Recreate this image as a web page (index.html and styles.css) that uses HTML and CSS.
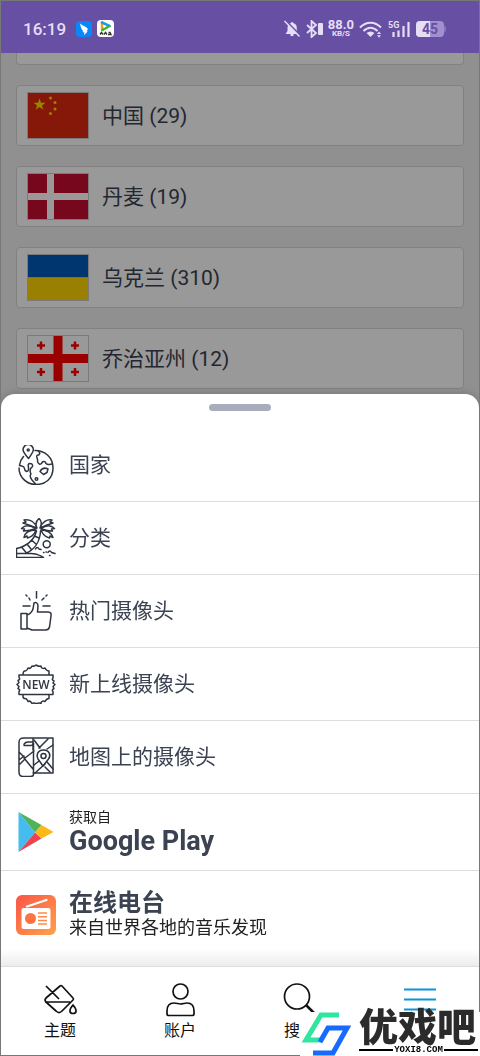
FILE: index.html
```
<!DOCTYPE html>
<html lang="zh-CN">
<head>
    <meta charset="UTF-8">
    <meta name="viewport" content="width=device-width, initial-scale=1.0">
    <title>摄像头</title>
    <link rel="stylesheet" href="styles.css">
</head>
<body>
    <header class="status-bar">
        <span class="clock">16:19</span>
        <svg class="app" viewBox="0 0 16 16" width="16" height="16">
            <rect width="16" height="16" rx="4" fill="#0a86fb"/>
            <path d="M4 2.5c2 1.800 5 2.600 7.200 4.500.9.9.6 2-.5 3.200l1 .2-3.800 3.800.6-2.700-2.200-.6 1-.7C5.500 8.600 4.400 5.500 4 2.500z" fill="#fff"/>
        </svg>
        <svg class="app" viewBox="0 0 17 17" width="17" height="17">
            <rect width="17" height="17" rx="4" fill="#fff"/>
            <path d="M5 2.500v7.500" stroke="#ff9d18" stroke-width="2.500" stroke-linecap="round"/>
            <path d="M5 2.500L12.500 6" stroke="#1a9bf0" stroke-width="2.500" stroke-linecap="round"/>
            <path d="M5.500 9.800L12.500 6" stroke="#35b82c" stroke-width="2.500" stroke-linecap="round"/>
            <path d="M7 5v3l2.500-1.800z" fill="#fff"/>
            <path d="M3 14.500l1.500-2 1.500 2M7 14.500l1.500-2 1.500 2M11.500 12.500h1.500l1 2h-3" fill="none" stroke="#333" stroke-width="1.400"/>
        </svg>
        <div class="signals">
            <svg viewBox="0 0 18 18" width="18" height="18">
                <path d="M2.500 14l2-3V8c0-3 1.500-4.500 3.500-5 .2-1.500 2-1.500 2.200 0 2.300.6 3.600 2.200 3.600 5v3l2 3z" fill="#e6def4"/>
                <path d="M7.500 15h3" stroke="#e6def4" stroke-width="2"/>
                <path d="M2.500 .5l15 15.500" stroke="#6750a4" stroke-width="2"/>
                <path d="M1.500 1l15 15.500" stroke="#e6def4" stroke-width="1.500"/>
            </svg>
            <svg viewBox="0 0 17 18" width="17" height="18">
                <path d="M1 5l9 8-4.500 4V1L10 5l-9 8" fill="none" stroke="#e6def4" stroke-width="1.800"/>
                <rect x="12" y="3" width="5" height="12" rx="1" fill="#e6def4"/>
            </svg>
            <div class="speed"><b>88.0</b><small>KB/S</small></div>
            <svg viewBox="0 0 24 18" width="24" height="18">
                <path d="M1 7.500C7 1 16 1 22 7.500M4.500 11C9 6.500 14 6.500 18.500 11" fill="none" stroke="#e6def4" stroke-width="2"/>
                <path d="M7.500 13c2.500-2 5.500-2 8 0l-4 4z" fill="#e6def4"/>
                <path d="M18 14l2-2.500 2 2.500zM18 15.200l2 2.500 2-2.500z" fill="#e6def4"/>
            </svg>
            <svg viewBox="0 0 23 18" width="23" height="18">
                <text x="0" y="8" class="net">5G</text>
                <path d="M5.500 12v5M10.500 10.500v6.500M15.500 6v11M20.500 2v15" stroke="#e6def4" stroke-width="2.200"/>
            </svg>
            <svg viewBox="0 0 31 16" width="31" height="16">
                <path d="M4 0h20a4 4 0 0 1 4 4v8a4 4 0 0 1-4 4H4a4 4 0 0 1-4-4V4a4 4 0 0 1 4-4z" fill="#a28fce"/>
                <path d="M28.500 4q2.500 4 0 8z" fill="#a28fce"/>
                <path d="M4 0h10v16H4a4 4 0 0 1-4-4V4a4 4 0 0 1 4-4z" fill="#e6def4"/>
                <text x="6" y="13" class="charge">45</text>
            </svg>
        </div>
    </header>

    <main class="countries">
        <div class="country country-cut"></div>
        <a class="country" href="#">
            <svg class="flag" viewBox="0 0 60 45">
                <path fill="#de2910" d="M0 0h60v45H0z"/>
                <path fill="#ffde00" d="M11.500 5.500l1.500 4.200h4.500l-3.600 2.700 1.400 4.300-3.800-2.600-3.800 2.600 1.400-4.300-3.600-2.700H10z"/>
                <g fill="#ffde00"><circle cx="22.500" cy="5" r="1.500"/><circle cx="27" cy="9.500" r="1.500"/><circle cx="27" cy="16" r="1.500"/><circle cx="22.500" cy="20.500" r="1.500"/></g>
            </svg>
            <span>中国 (29)</span>
        </a>
        <a class="country" href="#">
            <svg class="flag" viewBox="0 0 60 45">
                <path fill="#c60c30" d="M0 0h60v45H0z"/>
                <path fill="#fff" d="M19 0h7v45h-7zM0 19h60v7H0z"/>
            </svg>
            <span>丹麦 (19)</span>
        </a>
        <a class="country" href="#">
            <svg class="flag" viewBox="0 0 60 45">
                <path fill="#005bbb" d="M0 0h60v22.500H0z"/>
                <path fill="#ffd500" d="M0 22.500h60V45H0z"/>
            </svg>
            <span>乌克兰 (310)</span>
        </a>
        <a class="country" href="#">
            <svg class="flag" viewBox="0 0 60 45">
                <path fill="#fff" d="M0 0h60v45H0z"/>
                <path fill="#f00" d="M25.500 0h9v45h-9zM0 18h60v9H0z"/>
                <path stroke="#f00" stroke-width="2.500" d="M9 9.500h8M13 5.500v8M43 9.500h8M47 5.500v8M9 36h8M13 32v8M43 36h8M47 32v8"/>
            </svg>
            <span>乔治亚州 (12)</span>
        </a>
    </main>

    <div class="backdrop"></div>

    <section class="sheet">
        <div class="handle"></div>
        <a class="row" href="#">
            <svg class="icon" viewBox="0 0 40 40">
                <path d="M12.500 13.500C9 9.500 7 7 7 4.800a5.200 5.200 0 0 1 10.400 0c0 2.200-2 4.700-4.900 8.700z"/>
                <circle cx="12.200" cy="5" r="1"/>
                <path d="M19 5.500c10 0 18 7 18 17.500S29.500 39.500 20 39.500 3 32 3 23M7.500 11.500Q4 15.500 3.500 20"/>
                <path d="M3.500 20.500c3 1 4.500 0 5 3 0 2.500 3.500 4.500 4 1 .3-3-1.500-6 1.500-6 3 0 3.500 3 1 4.500-1.500 2-1 4 0 6M15 29c-1.500 1.500-.5 4 1 6l4 4.500"/>
                <path d="M22.500 6c2 2.500 1.500 4-1.500 4.500-1.500 2 1.500 3 .5 5.500 0 3 3.500 4.500 4.500 1.500 1-1.500 3.500-1.500 4 1 2 2 4.500.5 6 .5M24 26.500c2-3.500 5-4 8-2.500l-1 3.500-3.500 2z"/>
                <circle cx="20.500" cy="34" r="1.300"/>
            </svg>
            <span>国家</span>
        </a>
        <a class="row" href="#">
            <svg class="icon" viewBox="0 0 40 40">
                <path d="M21 10C19 4 14 1 8 2l2 2-3 1c4 1 8 3 14 5zM21 10c-2-4-1-7 2-9.500 3 2.500 3 5.500 1 9.500M24 10c2-6 7-9 12-8l-2 2 3 1c-4 1-8 3-13 5"/>
                <path d="M20 10.500C14 7 9 7 5.500 10.500l3 .5-1 2c4 0 8-.5 12.500-2.500zM25 10.500C30 7 35 7 38.500 10.500l-3 .5 1 2c-4 0-8-.5-11.500-2.500z"/>
                <path d="M20 12c-6 0-11 2-12 7.500l3-1.500.5 2c4-1 7-4 8.500-8zM25 12c6 0 10 2 12 7.500l-3-1.500-.5 2c-4-1-7-4-8.500-8z"/>
                <path d="M20.500 13C18 22 11 28 .5 30.500V39M24.500 13C24 24 18 32 9.500 35.500M18.500 18l4.500 2M15.500 22l4.500 4M11 26l4 5M5.500 29l5 6M.5 35.500c7-.5 14-.5 19 .5 3 1 6 1.500 8 3.500H.5z"/>
                <circle cx="30.700" cy="26.300" r="3.500"/>
                <path d="M19.500 31c1-2 2.500-2 3.500 0l2 .5M32 34.500c1-2 2.500-2 3.500 0l3.500 1M27.500 34.500h.5M30 34h.5M33.500 37.500h.5"/>
            </svg>
            <span>分类</span>
        </a>
        <a class="row" href="#">
            <svg class="icon" viewBox="0 0 40 40">
                <path d="M5 22.500h6V38H5zM11 24c3-1 5-3 6-6l1-6c2-1 4 0 4 3l-.5 6H32c3 0 3.500 2 3 4l-1.500 11c-.5 2-1.500 3-4 3H16l-5-2"/>
                <path d="M20.500 0v7M7 15h7M27 15h7M10 4l1 1M13 7l1 2M31 4l-1 1M28 7l-2 2"/>
            </svg>
            <span>热门摄像头</span>
        </a>
        <a class="row" href="#">
            <svg class="icon" viewBox="0 0 40 40">
                <path d="M3 11h34v3c-1 1-1 2 1 3l-1 2 2 1.500-2 2 1 2c-2 1-2 2-1 3v3H3v-3c1-1 1-2-1-3l1-2-2-2 2-2-1-2c2-1 2-2 1-3zM7 11c0-2 0-4 2-4 2 0 2-1 3-3 2 1 3 0 4-2 2 1 3 0 4-1 2 1 3 2 5 1 0 2 2 3 4 2 1 2 2 3 4 3v4M7 30.500c0 3 0 4 2 4 2 0 2 1 3 3 2-1 3 0 4 2 2-1 3 0 4 0 2 0 3-1 5 0 0-2 2-3 4-2 1-2 2-3 4-3v-4"/>
                <text x="20" y="25" class="badge">NEW</text>
            </svg>
            <span>新上线摄像头</span>
        </a>
        <a class="row" href="#">
            <svg class="icon" viewBox="0 0 40 40">
                <path d="M3 5v30c0 3 1 4.500 4 4.500h7c3 0 4-1 3.500-4V6M17 6c0 4-4 2-8 2.500C7 9 8 5 12 5h4M3 5.500c0-4 2-4.500 5-4.500h29v35H17M17 1v12M3 15l6 6 9-7M8 21l9 11M3 23l5-4M4 27l4-4"/>
                <path d="M27 29l-5-7c-2-3-1-9 5.500-9s7.500 6 5 9z"/>
                <circle cx="27.500" cy="19" r="2.500"/>
                <path d="M18 3l6 8M23 11l9-9M31 12l6-4M18 28l5-4M31 25l6 7M19 36l10-9M29 30l5 5"/>
            </svg>
            <span>地图上的摄像头</span>
        </a>
        <a class="row row-play" href="#">
            <svg class="logo" viewBox="0 0 40 40">
                <path fill="#45bcf0" d="M2.500 0v40L19 20.500z"/>
                <path fill="#4fb35c" d="M2.500 0l23 13L19 20.500z"/>
                <path fill="#e84553" d="M2.500 40l23-13.500-6.500-6z"/>
                <path fill="#fcb815" d="M25.500 13l12 7-12 6.500-6.500-6z"/>
            </svg>
            <div class="promo">
                <small>获取自</small>
                <strong>Google Play</strong>
            </div>
        </a>
        <a class="row row-radio" href="#">
            <svg class="logo" viewBox="0 0 40 40">
                <defs>
                    <linearGradient id="warm" x1="0" y1="0" x2="1" y2="1">
                        <stop offset="0" stop-color="#fb5548"/>
                        <stop offset="1" stop-color="#ffa14a"/>
                    </linearGradient>
                </defs>
                <rect width="40" height="40" rx="6" fill="url(#warm)"/>
                <path d="M11 11.500L30.500 5" stroke="#fff" stroke-width="2.200" stroke-linecap="round"/>
                <rect x="5.500" y="13" width="29" height="21" rx="2" fill="#fff"/>
                <circle cx="14.500" cy="23.500" r="5.500" fill="#ff743f"/>
                <path d="M22 18h9M22 21.700h9M22 25.400h9M22 29h9" stroke="#ff8a47" stroke-width="1.500"/>
            </svg>
            <div class="promo">
                <strong class="station">在线电台</strong>
                <span>来自世界各地的音乐发现</span>
            </div>
        </a>
    </section>

    <nav class="tabs">
        <button type="button">
            <svg viewBox="0 0 34 34">
                <path d="M3 3l13 13M17 3q1-1 2 0l11 12q1 1 0 2L19 28q-3 3-6 0L3 19q-2-2 0-4zM2 19h25"/>
                <path d="M30 22c-5 6-3 8.500 0 8.500s5-2.500 0-8.500z"/>
            </svg>
            <span>主题</span>
        </button>
        <button type="button">
            <svg viewBox="0 0 34 34">
                <circle cx="17.500" cy="8.500" r="7.500"/>
                <path d="M4 31v-3c0-6 3-8 7-8 3 0 4 1 6.500 1s4-1 6.500-1c4 0 7 2 7 8v3q0 1.500-2 1.500H6q-2 0-2-1.500z"/>
            </svg>
            <span>账户</span>
        </button>
        <button type="button">
            <svg viewBox="0 0 34 34">
                <circle cx="14" cy="13.500" r="12.500"/>
                <path d="M23 22l9 9" stroke-width="2.500"/>
            </svg>
            <span>搜索</span>
        </button>
        <button type="button" class="active" aria-label="菜单">
            <svg viewBox="0 0 34 34">
                <path d="M1 6.500h32M1 16.500h32M1 26.500h32"/>
            </svg>
        </button>
    </nav>

    <div class="watermark">
        <svg viewBox="0 0 52 44" width="52" height="44">
            <path d="M39 3H21L6 28h16" fill="none" stroke="#2ee6a0" stroke-width="5"/>
            <path d="M13 41h20l14-25H28L20 30" fill="none" stroke="#1769ff" stroke-width="5"/>
        </svg>
        <div class="brand">
            <strong>优戏吧</strong>
            <small>YOXI8.COM</small>
        </div>
    </div>
</body>
</html>
```
FILE: styles.css
```
* {
    box-sizing: border-box;
}
body {
    margin: 0;
    min-height: 100vh;
    background: #f1f1f1;
    color: #3b4252;
    font-family: Roboto, "Noto Sans CJK SC", sans-serif;
    font-size: 21px;
}
/* thin edge round the screen */
body::after {
    content: "";
    position: fixed;
    inset: 0;
    border: 1px solid #777;
    pointer-events: none;
    z-index: 4;
}
a {
    color: inherit;
    text-decoration: none;
}

/* status bar */
.status-bar {
    position: relative;
    z-index: 2;
    display: flex;
    align-items: center;
    height: 53px;
    padding: 4px 33px 0 23px;
    background: #6750a4;
    color: #e6def4;
}
.clock {
    font-size: 17px;
    font-weight: 500;
    margin-right: 10px;
}
.app {
    margin-right: 5px;
}
.signals {
    display: flex;
    align-items: center;
    gap: 5px;
    margin-left: auto;
}
.speed {
    display: flex;
    flex-direction: column;
    align-items: center;
    font-family: Roboto, sans-serif;
}
.speed b {
    font-size: 13px;
    line-height: 11px;
}
.speed small {
    font-size: 8px;
    line-height: 8px;
    font-weight: 700;
}
.net {
    font: 700 9px Roboto, sans-serif;
    fill: #e6def4;
}
.charge {
    font: 700 14px Roboto, sans-serif;
    fill: #6750a4;
}

/* country list */
.countries {
    display: flex;
    flex-direction: column;
    gap: 20px;
    padding: 0 16px;
}
.country {
    display: flex;
    align-items: center;
    gap: 13px;
    height: 61px;
    padding: 0 10px;
    background: #fff;
    border: 1px solid #d8d8d8;
    border-radius: 4px;
}
.country span {
    padding-bottom: 4px;
}
.country-cut {
    height: 12px;
    border-top: 0;
    border-radius: 0 0 4px 4px;
}
.flag {
    width: 62px;
    height: 47px;
    border: 1px solid #ccc;
}
.backdrop {
    position: fixed;
    inset: 0;
    background: rgba(0, 0, 0, 0.4);
    z-index: 1;
}

/* bottom sheet */
.sheet {
    position: fixed;
    left: 1px;
    right: 1px;
    bottom: 90px;
    z-index: 2;
    background: #fff;
    border-radius: 14px 14px 0 0;
    box-shadow: 0 0 8px rgba(0, 0, 0, 0.2);
}
.handle {
    width: 62px;
    height: 7px;
    margin: 10px auto 18px;
    border-radius: 4px;
    background: #a8adbb;
}
.row {
    display: flex;
    align-items: center;
    gap: 13px;
    height: 73px;
    padding: 0 15px;
    border-bottom: 1px solid #ddd;
}
.row > span {
    padding-bottom: 4px;
}
.icon {
    width: 40px;
    height: 40px;
    fill: none;
    stroke: #2e3440;
    stroke-width: 1.5;
    stroke-linejoin: round;
    stroke-linecap: round;
}
.badge {
    font: 600 12px "Open Sans", sans-serif;
    text-anchor: middle;
    fill: #2e3440;
    stroke: none;
}
.logo {
    width: 40px;
    height: 40px;
}
.row-play {
    height: 77px;
}
.row-radio {
    height: 95px;
    padding-bottom: 8px;
    border-bottom: 0;
    background: linear-gradient(#fff 82%, #ececec);
}
.promo {
    display: flex;
    flex-direction: column;
}
.promo small {
    color: #222;
    font-size: 14px;
    line-height: 18px;
}
.promo strong {
    font-size: 27px;
    line-height: 30px;
}
.promo .station {
    font-size: 24px;
    line-height: 26px;
}
.promo span {
    color: #222;
    font-size: 18px;
    line-height: 24px;
}

/* bottom tabs */
.tabs {
    position: fixed;
    left: 0;
    right: 0;
    bottom: 0;
    z-index: 3;
    display: grid;
    grid-template-columns: repeat(4, 1fr);
    height: 90px;
    background: #fff;
    border-top: 1px solid #ddd;
}
.tabs button {
    display: flex;
    flex-direction: column;
    align-items: center;
    gap: 2px;
    padding: 16px 0 0;
    border: 0;
    background: none;
    color: #111;
    font: 16px/24px Roboto, "Noto Sans CJK SC", sans-serif;
}
.tabs svg {
    width: 34px;
    height: 34px;
    fill: none;
    stroke: #111;
    stroke-width: 1.7;
    stroke-linejoin: round;
}
.tabs .active svg {
    stroke: #0a94dc;
    stroke-width: 2;
}

.watermark {
    position: fixed;
    right: 0;
    bottom: 0;
    z-index: 5;
    display: flex;
    width: 180px;
    height: 44px;
    background: #fff;
}
.brand {
    display: flex;
    flex-direction: column;
    flex: 1;
    padding: 0 2px 0 7px;
    color: #2b2b2b;
}
.brand strong {
    font-size: 39px;
    font-weight: 900;
    line-height: 32px;
}
.brand small {
    display: flex;
    align-items: center;
    gap: 1px;
    color: #000;
    font: 700 9px/12px "Liberation Mono", monospace;
}
.brand small::before,
.brand small::after {
    content: "";
    flex: 1;
    height: 2px;
    background: #000;
}
```
